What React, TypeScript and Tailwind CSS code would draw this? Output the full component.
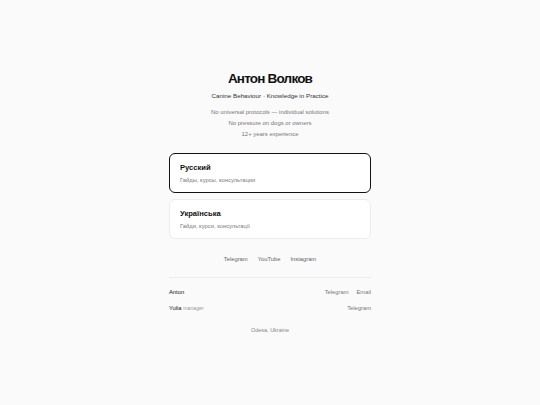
import React from "react";

export default function App() {
  return (
    <div className="min-h-[405px] w-full bg-[#fafafa] flex justify-center" style={{ fontFamily: '"Liberation Sans", Arial, sans-serif' }}>
      <div className="w-[202px] flex flex-col items-stretch pt-[71px]">
        <h1 className="text-center text-[13.5px] leading-[16px] font-bold text-[#111] tracking-[-0.8px]">Антон Волков</h1>
        <p className="mt-[3.5px] text-center text-[6.25px] leading-[9px] text-[#333]">Canine Behaviour · Knowledge in Practice</p>
        <div className="mt-[7px] flex flex-col items-center text-[5.95px] leading-[11px] text-[#777]">
          <span>No universal protocols — individual solutions</span>
          <span>No pressure on dogs or owners</span>
          <span>12+ years experience</span>
        </div>
        <div className="mt-[13.5px] flex flex-col gap-[6px]">
          <a className="block h-[40px] rounded-[6px] border border-[#111] bg-white px-[10px] pt-[9px]">
            <div className="text-[7.6px] leading-[10px] font-bold text-[#111]">Русский</div>
            <div className="mt-[3px] text-[5.8px] leading-[8px] text-[#7a7a7a]">Гайды, курсы, консультации</div>
          </a>
          <a className="block h-[40px] rounded-[6px] border border-[#ececec] bg-white px-[10px] pt-[9px]">
            <div className="text-[7.6px] leading-[10px] font-bold text-[#111]">Українська</div>
            <div className="mt-[3px] text-[5.8px] leading-[8px] text-[#7a7a7a]">Гайди, курси, консультації</div>
          </a>
        </div>
        <div className="mt-[15.5px] flex justify-center gap-[10px] text-[5.8px] leading-[9px] text-[#666]">
          <span>Telegram</span>
          <span>YouTube</span>
          <span>Instagram</span>
        </div>
        <div className="mt-[13.5px] border-t border-[#ececec]"></div>
        <div className="mt-[9.5px] flex justify-between text-[5.8px] leading-[9px]">
          <span className="text-[#111]">Anton</span>
          <div className="flex gap-[8px] text-[#777]">
            <span>Telegram</span>
            <span>Email</span>
          </div>
        </div>
        <div className="mt-[7px] flex justify-between text-[5.8px] leading-[9px]">
          <span className="text-[#111]">Yulia <span className="text-[#999] text-[5.2px]">manager</span></span>
          <span className="text-[#777]">Telegram</span>
        </div>
        <p className="mt-[13.5px] text-center text-[5.5px] leading-[8px] text-[#888]">Odesa, Ukraine</p>
      </div>
    </div>
  );
}
